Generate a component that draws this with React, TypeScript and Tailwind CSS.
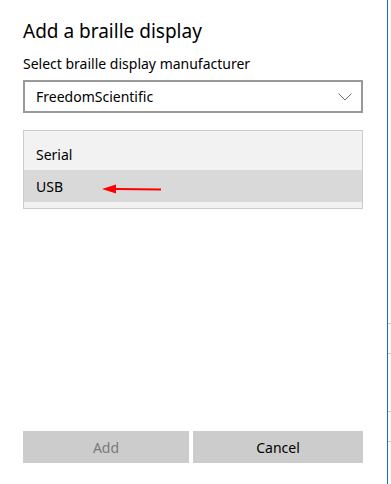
import React from 'react';

const font = { fontFamily: '"Noto Sans", "Open Sans", sans-serif' };

const Chevron: React.FC = () => (
  <svg width="14" height="8" viewBox="0 0 14 8" fill="none" className="shrink-0">
    <path d="M0.5 0.5 L7 7 L13.5 0.5" stroke="#6b6b6b" strokeWidth="1" />
  </svg>
);

const RedArrow: React.FC = () => (
  <svg width="60" height="10" viewBox="0 0 60 10" className="absolute left-[78px] top-[14px]">
    <path d="M14 4 L59 4.5 L59 6.5 L14 6 Z" fill="#ff0000" />
    <path d="M0 5 L14 0.5 L14 9.5 Z" fill="#ff0000" />
  </svg>
);

export default function App() {
  return (
    <div className="flex h-[484px] w-[391px] bg-white text-black" style={font}>
      <div className="flex w-[387px] flex-col pl-[23px] pr-[24px]">
        <h1 className="mt-[18px] text-[19px] leading-[26px] font-normal">Add a braille display</h1>

        <p className="mt-[10px] text-[14px] leading-[20px]">Select braille display manufacturer</p>

        <div className="mt-[6px] flex h-[33px] items-center justify-between border-2 border-[#999999] pl-[11px] pr-[9px]">
          <span className="text-[14px] leading-[20px]">FreedomScientific</span>
          <Chevron />
        </div>

        <div className="mt-[17px] border border-[#cccccc] bg-[#f2f2f2] pt-[7px] pb-[6px]">
          <div className="flex h-[32px] items-center pl-[12px] text-[14px]">Serial</div>
          <div className="relative flex h-[32px] items-center bg-[#d9d9d9] pl-[12px] text-[14px]">
            USB
            <RedArrow />
          </div>
        </div>

        <div className="mt-auto mb-[21px] flex gap-[4px]">
          <button className="h-[32px] w-[166px] bg-[#cccccc] text-[14px] text-[#7a7a7a]">Add</button>
          <button className="h-[32px] flex-1 bg-[#cccccc] text-[14px] text-black">Cancel</button>
        </div>
      </div>

      <div className="w-px bg-[#1a6fc4]" />

      <div className="flex w-[3px] flex-col bg-[#fafafa]">
        <div className="h-[323px]" />
        <div className="h-px bg-[#cfcfcf]" />
        <div className="h-[29px]" />
        <div className="h-px bg-[#cfcfcf]" />
        <div className="h-[57px]" />
        <div className="h-px bg-[#cfcfcf]" />
        <div className="h-[29px]" />
        <div className="h-px bg-[#cfcfcf]" />
      </div>
    </div>
  );
}
